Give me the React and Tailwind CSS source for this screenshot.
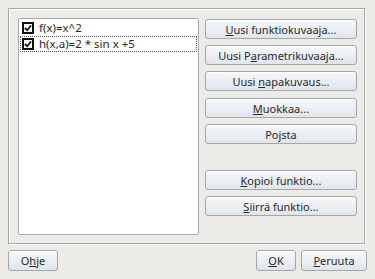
import React from "react";

function Btn({ children, className = "" }) {
  return (
    <button
      className={
        "h-[20px] rounded-[3px] border border-[#a3a7ab] bg-gradient-to-b from-[#f7f9fb] to-[#dfe5eb] text-[11px] leading-none text-[#2a2a2a] shadow-[inset_0_1px_0_#ffffff] " +
        className
      }
    >
      {children}
    </button>
  );
}

function Check({ label, focused }) {
  return (
    <div
      className={
        "flex items-center h-[16px] pl-[2px] " +
        (focused ? "outline outline-1 outline-dotted outline-[#555] -outline-offset-1" : "")
      }
    >
      <span className="w-[12px] h-[12px] border-2 border-[#111] bg-white flex items-center justify-center">
        <svg width="8" height="8" viewBox="0 0 8 8">
          <path d="M1 4 L3.2 6.2 L7 1.5" fill="none" stroke="#111" strokeWidth="1.8" />
        </svg>
      </span>
      <span className="ml-[5px] text-[11.5px] text-[#2a2a2a]">{label}</span>
    </div>
  );
}

export default function App() {
  return (
    <div
      className="w-[375px] h-[279px] bg-[#edebe8] px-[8px] pt-[8px] flex flex-col"
      style={{ fontFamily: '"Noto Sans", sans-serif' }}
    >
      <div className="h-[236px] w-[357px] border border-[#a8a6a2] shadow-[inset_1px_1px_0_#ffffff,1px_1px_0_#ffffff] flex pl-[9px] pt-[9px] pr-[7px] pb-[8px] gap-[6px]">
        <div className="w-[182px] h-[217px] bg-white border border-[#a9a9a9] rounded-[2px] pt-[1px] px-[1px]">
          <Check label="f(x)=x^2" />
          <Check label="h(x,a)=2 * sin x +5" focused />
        </div>
        <div className="flex flex-col w-[153px] pt-[1px]">
          <Btn className="mb-[6px]">
            <u>U</u>usi funktiokuvaaja...
          </Btn>
          <Btn className="mb-[6px]">
            Uusi P<u>a</u>rametrikuvaaja...
          </Btn>
          <Btn className="mb-[7px]">
            Uusi <u>n</u>apakuvaus...
          </Btn>
          <Btn className="mb-[6px]">
            <u>M</u>uokkaa...
          </Btn>
          <Btn className="mb-[26px]">Pojsta</Btn>
          <Btn className="mb-[6px]">
            <u>K</u>opioi funktio...
          </Btn>
          <Btn>
            <u>S</u>iirrä funktio...
          </Btn>
        </div>
      </div>
      <div className="flex mt-[6px]">
        <Btn className="w-[50px] h-[21px]">
          O<u>h</u>je
        </Btn>
        <div className="flex-1" />
        <Btn className="w-[40px] h-[21px] mr-[5px]">
          <u>O</u>K
        </Btn>
        <Btn className="w-[66px] h-[21px]">
          <u>P</u>eruuta
        </Btn>
      </div>
    </div>
  );
}
